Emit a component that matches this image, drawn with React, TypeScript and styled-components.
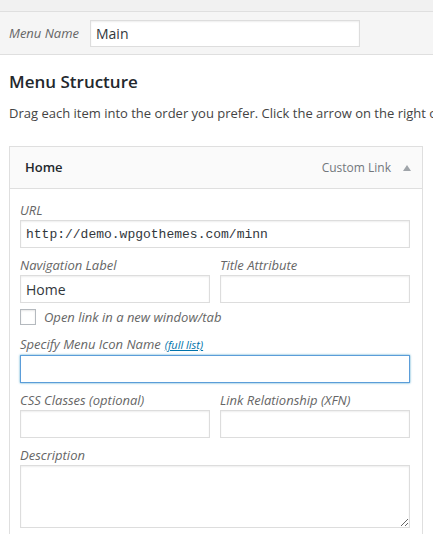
import React from 'react';
import styled, { createGlobalStyle } from 'styled-components';

const GlobalStyle = createGlobalStyle`
  html, body {
    margin: 0;
    padding: 0;
    background: #fff;
    overflow: hidden;
  }
  body {
    font-family: "Open Sans", "Liberation Sans", sans-serif;
    font-size: 13px;
    color: #444;
  }
  * { box-sizing: border-box; }
`;

const TopStrip = styled.div`
  height: 11px;
  background: #f1f1f1;
`;

const NameBar = styled.div`
  display: flex;
  align-items: center;
  height: 44px;
  padding: 0 9px;
  background: #f5f5f5;
  border-top: 1px solid #dfdfdf;
  border-bottom: 1px solid #dfdfdf;
`;

const NameLabel = styled.label`
  width: 81px;
  font-style: italic;
  color: #666;
`;

const Input = styled.input<{ $mono?: boolean; $focus?: boolean; $h?: number }>`
  display: block;
  width: 100%;
  height: ${(p) => p.$h ?? 28}px;
  margin: 0;
  padding: 3px 5px;
  border: 1px solid ${(p) => (p.$focus ? '#5b9dd9' : '#ddd')};
  box-shadow: ${(p) =>
    p.$focus ? '0 0 2px rgba(30, 140, 190, 0.8)' : 'inset 0 1px 2px rgba(0, 0, 0, 0.07)'};
  background: #fff;
  color: #32373c;
  font-family: ${(p) =>
    p.$mono ? '"Liberation Mono", "DejaVu Sans Mono", monospace' : '"Open Sans", "Liberation Sans", sans-serif'};
  font-size: ${(p) => (p.$mono ? 13 : 14)}px;
  outline: none;
`;

const MenuNameInput = styled(Input)`
  width: 270px;
`;

const Content = styled.div`
  padding: 0 9px;
  white-space: nowrap;
`;

const Heading = styled.h3`
  margin: 15px 0 10px;
  font-size: 17px;
  font-weight: 600;
  line-height: 24px;
  color: #23282d;
`;

const Intro = styled.p`
  margin: 0 0 24px;
  line-height: 18px;
  color: #444;
`;

const Card = styled.div`
  width: 414px;
`;

const CardHead = styled.div`
  display: flex;
  align-items: center;
  height: 43px;
  padding: 0 11px 0 15px;
  background: #fafafa;
  border: 1px solid #dfdfdf;
`;

const ItemTitle = styled.span`
  flex: 1;
  font-weight: 600;
  color: #23282d;
  margin-top: -1px;
`;

const ItemType = styled.span`
  font-size: 12px;
  color: #72777c;
  margin-top: -1px;
`;

const Arrow = styled.span`
  margin-left: 12px;
  width: 0;
  height: 0;
  border-left: 4px solid transparent;
  border-right: 4px solid transparent;
  border-bottom: 6px solid #a0a5aa;
`;

const CardBody = styled.div`
  padding: 12px 12px 20px 10px;
  border: 1px solid #dfdfdf;
  border-top: none;
`;

const Row = styled.div`
  display: grid;
  grid-template-columns: 1fr 1fr;
  gap: 10px;
`;

const Field = styled.div`
  margin-bottom: 8px;
`;

const Label = styled.label`
  display: block;
  margin-bottom: 1px;
  line-height: 18px;
  font-style: italic;
  color: #666;
`;

const SmallLink = styled.a`
  margin-left: 4px;
  font-size: 11px;
  color: #0073aa;
  text-decoration: underline;
`;

const CheckRow = styled.label`
  display: flex;
  align-items: center;
  gap: 8px;
  margin: -2px 0 10px;
  height: 16px;
  font-style: italic;
  color: #666;
`;

const Box = styled.span`
  width: 16px;
  height: 16px;
  border: 1px solid #b4b9be;
  background: #fff;
  box-shadow: inset 0 1px 2px rgba(0, 0, 0, 0.1);
`;

const TextArea = styled.textarea`
  display: block;
  width: 100%;
  height: 63px;
  margin: 0;
  border: 1px solid #ddd;
  box-shadow: inset 0 1px 2px rgba(0, 0, 0, 0.07);
  outline: none;
  resize: vertical;
`;

export default function App() {
  return (
    <>
      <GlobalStyle />
      <TopStrip />
      <NameBar>
        <NameLabel>Menu Name</NameLabel>
        <MenuNameInput $h={27} defaultValue="Main" />
      </NameBar>
      <Content>
        <Heading>Menu Structure</Heading>
        <Intro>
          Drag each item into the order you prefer. Click the arrow on the right of the item to reveal
          additional configuration options.
        </Intro>
        <Card>
          <CardHead>
            <ItemTitle>Home</ItemTitle>
            <ItemType>Custom Link</ItemType>
            <Arrow />
          </CardHead>
          <CardBody>
            <Field>
              <Label>URL</Label>
              <Input $mono defaultValue="http://demo.wpgothemes.com/minn" />
            </Field>
            <Row>
              <Field>
                <Label>Navigation Label</Label>
                <Input defaultValue="Home" />
              </Field>
              <Field>
                <Label>Title Attribute</Label>
                <Input />
              </Field>
            </Row>
            <CheckRow>
              <Box />
              Open link in a new window/tab
            </CheckRow>
            <Field>
              <Label>
                Specify Menu Icon Name<SmallLink href="#">(full list)</SmallLink>
              </Label>
              <Input $focus />
            </Field>
            <Row>
              <Field>
                <Label>CSS Classes (optional)</Label>
                <Input />
              </Field>
              <Field>
                <Label>Link Relationship (XFN)</Label>
                <Input />
              </Field>
            </Row>
            <Field>
              <Label>Description</Label>
              <TextArea />
            </Field>
          </CardBody>
        </Card>
      </Content>
    </>
  );
}
